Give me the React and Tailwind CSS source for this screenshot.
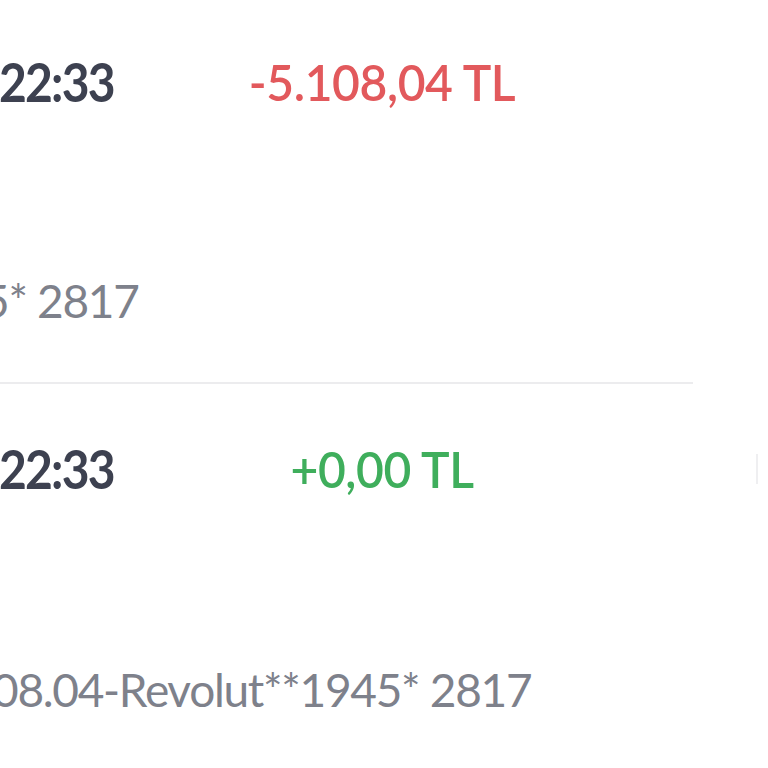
export default function App() {
  const rows = [
    { time: "22:33", amount: "-5.108,04 TL", positive: false, note: "5* 2817", noteShift: "-ml-[17px]" },
    { time: "22:33", amount: "+0,00 TL", positive: true, note: "08.04-Revolut**1945* 2817", noteShift: "-ml-[8px]" },
  ];

  return (
    <div className="w-[768px] h-[768px] overflow-hidden bg-white font-['Lato',sans-serif]">
      {rows.map((row, i) => (
        <div key={i}>
          {i > 0 && <div className="mt-[57px] h-[2px] w-[693px] bg-[#ececee]" />}
          <div className={`flex items-center h-[48px] ${i === 0 ? "mt-[58px]" : "mt-[61px]"}`}>
            <div className="w-[198px] -ml-[1px] text-[48px] leading-[48px] font-bold tracking-[-1.8px] text-[#3d4150] scale-y-110">
              {row.time}
            </div>
            <div
              className={`w-[370px] text-center text-[48px] leading-[48px] font-semibold tracking-[-0.4px] scale-y-105 ${
                row.positive ? "text-[#3fae5c]" : "text-[#e2595c]"
              }`}
            >
              {row.amount}
            </div>
            <div className="flex-1 flex justify-end pr-[10px]">
              {row.positive && <div className="h-[30px] w-[2px] bg-[#efeff1]" />}
            </div>
          </div>
          <div
            className={`h-[48px] text-[46px] leading-[48px] tracking-[-1.3px] whitespace-nowrap text-[#7e818b] ${row.noteShift} ${
              i === 0 ? "mt-[171px]" : "mt-[173px]"
            }`}
          >
            {row.note}
          </div>
        </div>
      ))}
    </div>
  );
}
